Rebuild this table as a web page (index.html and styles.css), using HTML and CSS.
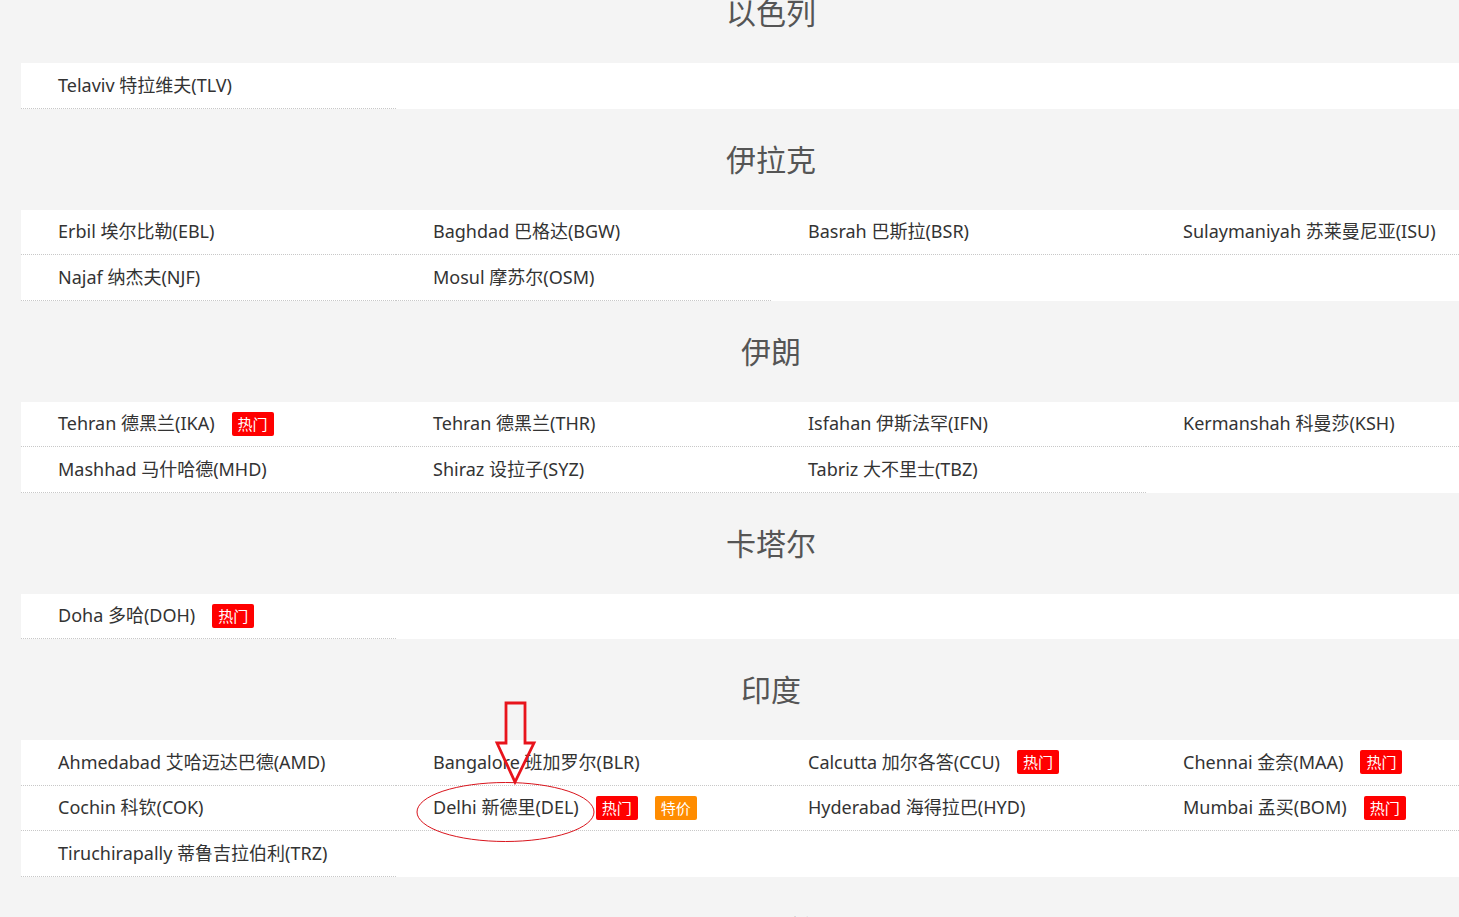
FILE: index.html
```html
<!DOCTYPE html>
<html lang="zh-CN">
<head>
<meta charset="utf-8">
<title>国际机场列表</title>
<link rel="stylesheet" href="styles.css">
</head>
<body>
<div class="page">
  <section class="country">
    <h2 class="country-title">以色列</h2>
    <ul class="city-list">
      <li class="city"><span class="city-name">Telaviv 特拉维夫(TLV)</span></li>
    </ul>
  </section>

  <section class="country">
    <h2 class="country-title">伊拉克</h2>
    <ul class="city-list">
      <li class="city"><span class="city-name">Erbil 埃尔比勒(EBL)</span></li>
      <li class="city"><span class="city-name">Baghdad 巴格达(BGW)</span></li>
      <li class="city"><span class="city-name">Basrah 巴斯拉(BSR)</span></li>
      <li class="city"><span class="city-name">Sulaymaniyah 苏莱曼尼亚(ISU)</span></li>
      <li class="city"><span class="city-name">Najaf 纳杰夫(NJF)</span></li>
      <li class="city"><span class="city-name">Mosul 摩苏尔(OSM)</span></li>
    </ul>
  </section>

  <section class="country">
    <h2 class="country-title">伊朗</h2>
    <ul class="city-list">
      <li class="city"><span class="city-name">Tehran 德黑兰(IKA)</span><span class="tag tag-hot">热门</span></li>
      <li class="city"><span class="city-name">Tehran 德黑兰(THR)</span></li>
      <li class="city"><span class="city-name">Isfahan 伊斯法罕(IFN)</span></li>
      <li class="city"><span class="city-name">Kermanshah 科曼莎(KSH)</span></li>
      <li class="city"><span class="city-name">Mashhad 马什哈德(MHD)</span></li>
      <li class="city"><span class="city-name">Shiraz 设拉子(SYZ)</span></li>
      <li class="city"><span class="city-name">Tabriz 大不里士(TBZ)</span></li>
    </ul>
  </section>

  <section class="country">
    <h2 class="country-title">卡塔尔</h2>
    <ul class="city-list">
      <li class="city"><span class="city-name">Doha 多哈(DOH)</span><span class="tag tag-hot">热门</span></li>
    </ul>
  </section>

  <section class="country">
    <h2 class="country-title">印度</h2>
    <ul class="city-list">
      <li class="city"><span class="city-name">Ahmedabad 艾哈迈达巴德(AMD)</span></li>
      <li class="city"><span class="city-name">Bangalore 班加罗尔(BLR)</span></li>
      <li class="city"><span class="city-name">Calcutta 加尔各答(CCU)</span><span class="tag tag-hot">热门</span></li>
      <li class="city"><span class="city-name">Chennai 金奈(MAA)</span><span class="tag tag-hot">热门</span></li>
      <li class="city"><span class="city-name">Cochin 科钦(COK)</span></li>
      <li class="city"><span class="city-name">Delhi 新德里(DEL)</span><span class="tag tag-hot">热门</span><span class="tag tag-sale">特价</span></li>
      <li class="city"><span class="city-name">Hyderabad 海得拉巴(HYD)</span></li>
      <li class="city"><span class="city-name">Mumbai 孟买(BOM)</span><span class="tag tag-hot">热门</span></li>
      <li class="city"><span class="city-name">Tiruchirapally 蒂鲁吉拉伯利(TRZ)</span></li>
    </ul>
  </section>

  <section class="country">
    <h2 class="country-title">阿联酋</h2>
  </section>

  <svg class="annotation" width="200" height="150" viewBox="0 0 200 150" aria-hidden="true">
    <path d="M89 2 H108 V42 H117 L98 81 L80 42 H89 Z" fill="none" stroke="#e8141c" stroke-width="2.8" stroke-linejoin="miter"/>
    <ellipse cx="88.5" cy="111" rx="88.5" ry="29.5" fill="none" stroke="#d9141c" stroke-width="1"/>
  </svg>
</div>
</body>
</html>
```

FILE: styles.css
```css
html {
  overflow: hidden;
  background: #f4f4f4;
}

body {
  margin: 0;
  background: #f4f4f4;
  font-family: "Noto Sans", "Noto Sans CJK SC", sans-serif;
  color: #333;
}

.page {
  position: relative;
  width: 1500px;
  margin: -38px 0 0 21px;
}

.country-title {
  margin: 0;
  padding: 29px 0 32px;
  line-height: 40px;
  font-size: 30px;
  font-weight: normal;
  text-align: center;
  color: #555;
  font-family: "Noto Sans CJK SC", sans-serif;
}

.country:last-of-type .country-title {
  padding-top: 32px;
}

.city-list {
  list-style: none;
  margin: 0;
  padding: 0;
  display: grid;
  grid-template-columns: repeat(4, 375px);
  background: #fff;
}

.city {
  box-sizing: border-box;
  display: flex;
  align-items: center;
  height: 45.5px;
  padding-left: 37px;
  border-bottom: 1px dotted #c8c8c8;
  font-size: 18px;
  white-space: nowrap;
}

.city-name {
  color: #333;
  margin-bottom: 3px;
}

.tag {
  margin-left: 17px;
  width: 42px;
  height: 24px;
  line-height: 24px;
  border-radius: 2px;
  color: #fff;
  font-size: 15px;
  text-align: center;
  font-family: "Noto Sans CJK SC", sans-serif;
}

.tag-hot {
  background: #ff0000;
}

.tag-sale {
  background: #ff8c00;
}

.annotation {
  position: absolute;
  left: 396px;
  top: 739px;
  overflow: visible;
}
```
